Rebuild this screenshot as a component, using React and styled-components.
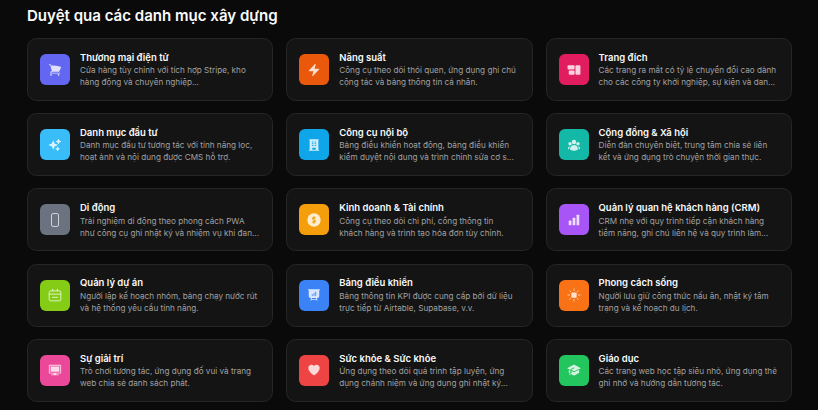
import React from 'react'
import styled, { createGlobalStyle } from 'styled-components'
import {
  HiShoppingCart,
  HiBolt,
  HiSparkles,
  HiBuildingOffice,
  HiUserGroup,
  HiPresentationChartBar,
  HiTv,
  HiHeart,
  HiAcademicCap,
} from 'react-icons/hi2'

const GlobalStyle = createGlobalStyle`
  html, body {
    margin: 0;
    background: #0a0a0a;
  }
  body {
    font-family: Inter, "Noto Sans", sans-serif;
    color: #fff;
  }
`

const Page = styled.main`
  width: 818px;
  height: 410px;
  box-sizing: border-box;
  padding: 6px 26px 0 27px;
  overflow: hidden;
`

const Heading = styled.h2`
  margin: 0 0 12px;
  font-size: 15.05px;
  line-height: 20px;
  font-weight: 600;
  color: #fafafa;
`

const Grid = styled.div`
  display: grid;
  grid-template-columns: repeat(3, 1fr);
  gap: 12.2px 12.8px;
`

const Card = styled.article`
  display: flex;
  align-items: center;
  gap: 10px;
  height: 63px;
  box-sizing: border-box;
  padding: 0 13px 0 12px;
  background: #141414;
  border: 1px solid #262626;
  border-radius: 9.6px;
`

const IconTile = styled.div`
  flex: none;
  display: flex;
  align-items: center;
  justify-content: center;
  width: 30px;
  height: 31px;
  border-radius: 6px;
  background: ${(p) => p.$color};
  color: rgba(255, 255, 255, 0.8);

  svg {
    width: 14px;
    height: 14px;
    display: block;
  }
`

const Body = styled.div`
  min-width: 0;
  flex: 1;
  padding-top: 1px;
`

const Title = styled.h3`
  margin: 0;
  font-size: 9.5px;
  line-height: 12.4px;
  font-weight: 600;
  color: #fafafa;
`

const Desc = styled.p`
  margin: 0;
  font-size: 8.16px;
  line-height: 12px;
  color: #a1a1a1;
`

const Phone = () => (
  <svg viewBox="0 0 24 24" fill="none" stroke="currentColor" strokeWidth="1.5">
    <rect x="6" y="1" width="12" height="22" rx="2.5" />
  </svg>
)

const Blocks = () => (
  <svg viewBox="0 0 24 24" fill="currentColor">
    <rect x="1" y="4" width="12" height="7" rx="1.5" />
    <rect x="3" y="13" width="10" height="7" rx="1.5" />
    <rect x="14.5" y="4" width="8.5" height="16" rx="1.5" />
  </svg>
)

const Coin = () => (
  <svg viewBox="0 0 24 24">
    <circle cx="12" cy="12" r="11.5" fill="currentColor" />
    <path
      d="M12 5.5v13M15 8.5c-.8-1-4.8-1.6-5.6.4-.9 2.3 5.5 2.5 5.2 5.3-.3 2.2-4.6 2-5.6.6"
      stroke="#f59e0b"
      strokeWidth="1.8"
      fill="none"
    />
  </svg>
)

const Bars = () => (
  <svg viewBox="0 0 24 24" fill="currentColor">
    <rect x="3" y="13" width="4.6" height="8" rx="1" />
    <rect x="9.7" y="8" width="4.6" height="13" rx="1" />
    <rect x="16.4" y="3" width="4.6" height="18" rx="1" />
  </svg>
)

const CalendarIcon = () => (
  <svg viewBox="0 0 24 24" fill="none" stroke="currentColor" strokeWidth="1.6">
    <rect x="2" y="5" width="20" height="17" rx="2.5" />
    <path d="M2 10.5h20M8 1.5v4M16 1.5v4M7 16h10" />
  </svg>
)

const SunRays = () => (
  <svg viewBox="0 0 24 24" fill="none" stroke="currentColor" strokeWidth="1.6" strokeLinecap="round">
    <rect x="7.5" y="7.5" width="9" height="9" rx="1.5" fill="currentColor" stroke="none" />
    <path
      d="M12 1.5v3M12 19.5v3M1.5 12h3M19.5 12h3M4.5 4.5l2 2M17.5 17.5l2 2M4.5 19.5l2-2M17.5 6.5l2-2"
      strokeOpacity="0.8"
    />
  </svg>
)

const categories = [
  { title: 'Thương mại điện tử', desc: 'Cửa hàng tùy chỉnh với tích hợp Stripe, kho hàng động và chuyên nghiệp...', color: '#6366f1', Icon: HiShoppingCart },
  { title: 'Năng suất', desc: 'Công cụ theo dõi thói quen, ứng dụng ghi chú cộng tác và bảng thông tin cá nhân.', color: '#ea580c', Icon: HiBolt },
  { title: 'Trang đích', desc: 'Các trang ra mắt có tỷ lệ chuyển đổi cao dành cho các công ty khởi nghiệp, sự kiện và dan...', color: '#e11d5f', Icon: Blocks },
  { title: 'Danh mục đầu tư', desc: 'Danh mục đầu tư tương tác với tính năng lọc, hoạt ảnh và nội dung được CMS hỗ trợ.', color: '#38bdf8', Icon: HiSparkles },
  { title: 'Công cụ nội bộ', desc: 'Bảng điều khiển hoạt động, bảng điều khiển kiểm duyệt nội dung và trình chỉnh sửa cơ s...', color: '#0ea5e9', Icon: HiBuildingOffice },
  { title: 'Cộng đồng & Xã hội', desc: 'Diễn đàn chuyên biệt, trung tâm chia sẻ liên kết và ứng dụng trò chuyện thời gian thực.', color: '#14b8a6', Icon: HiUserGroup },
  { title: 'Di động', desc: 'Trải nghiệm di động theo phong cách PWA như công cụ ghi nhật ký và nhiệm vụ khi đan...', color: '#6b7280', Icon: Phone },
  { title: 'Kinh doanh & Tài chính', desc: 'Công cụ theo dõi chi phí, cổng thông tin khách hàng và trình tạo hóa đơn tùy chỉnh.', color: '#f59e0b', Icon: Coin },
  { title: 'Quản lý quan hệ khách hàng (CRM)', desc: 'CRM nhẹ với quy trình tiếp cận khách hàng tiềm năng, ghi chú liên hệ và quy trình làm...', color: '#a855f7', Icon: Bars },
  { title: 'Quản lý dự án', desc: 'Người lập kế hoạch nhóm, bảng chạy nước rút và hệ thống yêu cầu tính năng.', color: '#84cc16', Icon: CalendarIcon },
  { title: 'Bảng điều khiển', desc: 'Bảng thông tin KPI được cung cấp bởi dữ liệu trực tiếp từ Airtable, Supabase, v.v.', color: '#3b82f6', Icon: HiPresentationChartBar },
  { title: 'Phong cách sống', desc: 'Người lưu giữ công thức nấu ăn, nhật ký tâm trạng và kế hoạch du lịch.', color: '#f97316', Icon: SunRays },
  { title: 'Sự giải trí', desc: 'Trò chơi tương tác, ứng dụng đố vui và trang web chia sẻ danh sách phát.', color: '#ec4899', Icon: HiTv },
  { title: 'Sức khỏe & Sức khỏe', desc: 'Ứng dụng theo dõi quá trình tập luyện, ứng dụng chánh niệm và ứng dụng ghi nhật ký...', color: '#ef4444', Icon: HiHeart },
  { title: 'Giáo dục', desc: 'Các trang web học tập siêu nhỏ, ứng dụng thẻ ghi nhớ và hướng dẫn tương tác.', color: '#22c55e', Icon: HiAcademicCap },
]

export default function App() {
  return (
    <>
      <GlobalStyle />
      <Page>
        <Heading>Duyệt qua các danh mục xây dựng</Heading>
        <Grid>
          {categories.map(({ title, desc, color, Icon }) => (
            <Card key={title}>
              <IconTile $color={color}>
                <Icon />
              </IconTile>
              <Body>
                <Title>{title}</Title>
                <Desc>{desc}</Desc>
              </Body>
            </Card>
          ))}
        </Grid>
      </Page>
    </>
  )
}
